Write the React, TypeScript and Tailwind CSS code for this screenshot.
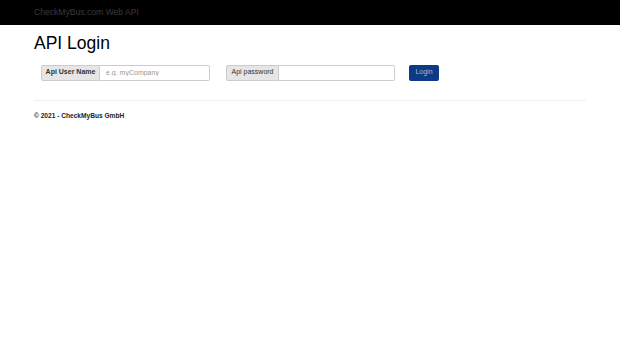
import React from "react";

export default function App() {
  return (
    <div className="min-h-[343px] bg-white" style={{ fontFamily: '"Liberation Sans", Arial, sans-serif' }}>
      <div className="h-[25px] bg-black flex items-center px-[34px]">
        <span className="text-[8.6px] text-[#3a3a3a]">CheckMyBus.com Web API</span>
      </div>
      <div className="px-[34px]">
        <h1 className="text-[17.5px] leading-none text-black mt-[10px]">API Login</h1>
        <div className="flex items-center mt-[12px] pl-[7px]">
          <div className="flex h-[16px]">
            <span className="w-[59px] flex items-center justify-center bg-[#e6e6e6] border border-[#cccccc] rounded-l-[2px] text-[7px] font-bold text-[#333]">Api User Name</span>
            <input
              className="w-[110px] h-full border border-l-0 border-[#cccccc] rounded-r-[2px] px-[6px] text-[7px] outline-none placeholder:text-[#999]"
              placeholder="e.g. myCompany"
            />
          </div>
          <div className="flex h-[16px] ml-[16px]">
            <span className="w-[53px] flex items-center justify-center bg-[#e6e6e6] border border-[#cccccc] rounded-l-[2px] text-[7px] text-[#333]">Api password</span>
            <input type="password" className="w-[116px] h-full border border-l-0 border-[#cccccc] rounded-r-[2px] px-[6px] text-[7px] outline-none" />
          </div>
          <button className="ml-[14px] w-[30px] h-[16px] bg-[#0b3a86] rounded-[2px] text-[7px] text-[#a9b8d6]">Login</button>
        </div>
        <div className="mt-[19px] border-t border-[#eeeeee] w-[552px]" />
        <div className="mt-[10px] text-[6.6px] font-bold text-[#222]">© 2021 - CheckMyBus GmbH</div>
      </div>
    </div>
  );
}
